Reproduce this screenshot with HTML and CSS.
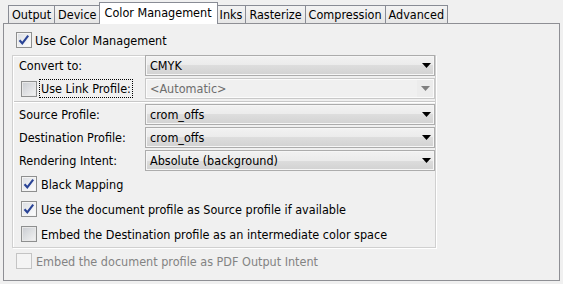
FILE: index.html
```html
<!DOCTYPE html>
<html>
<head>
<meta charset="utf-8">
<link rel="stylesheet" href="styles.css">
</head>
<body>
<div class="tabs">
  <div class="tab">Output</div>
  <div class="tab">Device</div>
  <div class="tab active">Color Management</div>
  <div class="tab">Inks</div>
  <div class="tab">Rasterize</div>
  <div class="tab">Compression</div>
  <div class="tab">Advanced</div>
</div>
<div class="panel">
  <div class="cb-row top-row">
    <span class="cb checked"><svg viewBox="0 0 16 16" width="16" height="16"><path d="M3.5 8.2 L6.3 11.3 L12.2 3.6" fill="none" stroke="#2a4496" stroke-width="2.1"/></svg></span>
    <span class="cb-text">Use Color Management</span>
  </div>
  <div class="group">
    <div class="row">
      <span class="lbl">Convert to:</span>
      <div class="combo"><span class="combo-text">CMYK</span><svg class="arrow" viewBox="0 0 9 5" width="9" height="5"><polygon points="0,0 9,0 4.5,5" fill="#000"/></svg></div>
    </div>
    <div class="row">
      <span class="lbl lbl-check"><span class="cb plain"></span><span class="focus">Use Link Profile:</span></span>
      <div class="combo disabled"><span class="combo-text">&lt;Automatic&gt;</span><span class="btn"><svg class="arrow" viewBox="0 0 9 5" width="9" height="5"><polygon points="0,0 9,0 4.5,5" fill="#808080"/></svg></span></div>
    </div>
    <div class="sep"></div>
    <div class="row">
      <span class="lbl">Source Profile:</span>
      <div class="combo"><span class="combo-text">crom_offs</span><svg class="arrow" viewBox="0 0 9 5" width="9" height="5"><polygon points="0,0 9,0 4.5,5" fill="#000"/></svg></div>
    </div>
    <div class="row">
      <span class="lbl">Destination Profile:</span>
      <div class="combo"><span class="combo-text">crom_offs</span><svg class="arrow" viewBox="0 0 9 5" width="9" height="5"><polygon points="0,0 9,0 4.5,5" fill="#000"/></svg></div>
    </div>
    <div class="row">
      <span class="lbl">Rendering Intent:</span>
      <div class="combo"><span class="combo-text">Absolute (background)</span><svg class="arrow" viewBox="0 0 9 5" width="9" height="5"><polygon points="0,0 9,0 4.5,5" fill="#000"/></svg></div>
    </div>
    <div class="checks">
      <div class="cb-row">
        <span class="cb checked"><svg viewBox="0 0 16 16" width="16" height="16"><path d="M3.5 8.2 L6.3 11.3 L12.2 3.6" fill="none" stroke="#2a4496" stroke-width="2.1"/></svg></span>
        <span class="cb-text">Black Mapping</span>
      </div>
      <div class="cb-row">
        <span class="cb checked"><svg viewBox="0 0 16 16" width="16" height="16"><path d="M3.5 8.2 L6.3 11.3 L12.2 3.6" fill="none" stroke="#2a4496" stroke-width="2.1"/></svg></span>
        <span class="cb-text">Use the document profile as Source profile if available</span>
      </div>
      <div class="cb-row">
        <span class="cb plain"></span>
        <span class="cb-text">Embed the Destination profile as an intermediate color space</span>
      </div>
    </div>
  </div>
  <div class="cb-row bottom-row">
    <span class="cb off"></span>
    <span class="cb-text dim">Embed the document profile as PDF Output Intent</span>
  </div>
</div>
</body>
</html>
```

FILE: styles.css
```css
html, body {
  margin: 0;
  padding: 0;
  background: #f0f0f0;
  width: 563px;
  height: 284px;
  overflow: hidden;
}
body {
  font-family: "DejaVu Sans Condensed", "DejaVu Sans", sans-serif;
  font-stretch: condensed;
  font-size: 12.5px;
  color: #000;
}
.tabs {
  display: flex;
  align-items: flex-end;
  height: 23px;
  padding-left: 8px;
}
.tab {
  height: 18px;
  box-sizing: border-box;
  border: 1px solid #898c95;
  border-bottom: none;
  margin-right: -1px;
  padding: 1px 3px 0;
  display: flex;
  align-items: center;
  background: linear-gradient(#f3f3f3, #e6e6e6);
  line-height: 1;
}
.tab.active {
  height: 22px;
  margin-bottom: -1px;
  background: #fff;
  position: relative;
  z-index: 2;
  padding: 0 5px 1px;
  margin-left: -1px;
  margin-right: -2px;
}
.panel {
  margin: 0 3px;
  height: 258px;
  box-sizing: border-box;
  border: 1px solid #8e8f94;
  background: #f0f0f0;
  position: relative;
  z-index: 1;
}
.cb-row {
  display: flex;
  align-items: center;
  height: 16px;
}
.top-row {
  margin: 8px 0 0 12px;
}
.top-row .cb-text { margin-left: 3px; }
.cb {
  width: 16px;
  height: 16px;
  box-sizing: border-box;
  border: 1px solid #8e8f8f;
  background: linear-gradient(135deg, #dadde2, #ffffff);
  box-shadow: inset 0 0 0 1px #f4f4f4;
  display: inline-flex;
  flex: none;
}
.cb svg { margin: -1px; }
.cb.plain {
  background: linear-gradient(135deg, #c9ccd1, #f4f4f4);
  box-shadow: inset 0 0 0 1px #e8e8e8;
}
.cb.off {
  border-color: #c4c4c4;
  background: #f4f4f4;
  box-shadow: none;
}
.group {
  margin: 7px 0 0 8px;
  width: 424px;
  box-sizing: border-box;
  border: 1px solid #d0d0d0;
  box-shadow: 1px 1px 0 #fff, inset 1px 1px 0 #fff;
  padding-bottom: 5px;
}
.row {
  display: flex;
  align-items: center;
  height: 21px;
  margin-bottom: 2px;
}
.row:first-child { margin-top: -1px; }
.lbl {
  width: 126px;
  padding-left: 6px;
  flex: none;
  display: flex;
  align-items: center;
}
.lbl-check {
  padding-left: 8px;
  width: 124px;
}
.focus {
  margin-left: 2px;
  padding: 1px 1px;
  border: 1px dotted #000;
}
.combo {
  flex: none;
  width: 290px;
  height: 21px;
  box-sizing: border-box;
  border: 1px solid #acacac;
  box-shadow: inset 0 0 0 1px #f6f6f6;
  background: linear-gradient(#f2f2f2, #ebebeb 50%, #dddddd 50%, #d2d2d2);
  display: flex;
  align-items: center;
  padding-left: 4px;
}
.combo-text { flex: 1; }
.arrow { margin-right: 3px; flex: none; }
.combo.disabled {
  border-color: #c8c8c8;
  background: #f0f0f0;
  box-shadow: inset 0 0 0 1px #fbfbfb;
  color: #6d6d6d;
  padding-right: 0;
}
.combo.disabled .btn {
  width: 16px;
  height: 17px;
  display: flex;
  align-items: center;
  justify-content: center;
  background: #ececec;
  margin-right: 1px;
}
.combo.disabled .btn .arrow { margin: 0; }
.sep {
  height: 0;
  border-top: 1px solid #c8c8c8;
  border-bottom: 1px solid #fff;
  margin: 0 0 1px 1px;
}
.checks {
  display: flex;
  flex-direction: column;
  gap: 9px;
  padding: 3px 0 0 8px;
}
.checks .cb-text { margin-left: 4px; }
.bottom-row {
  margin: 5px 0 0 12px;
}
.bottom-row .cb-text { margin-left: 4px; }
.dim { color: #838383; }
```
